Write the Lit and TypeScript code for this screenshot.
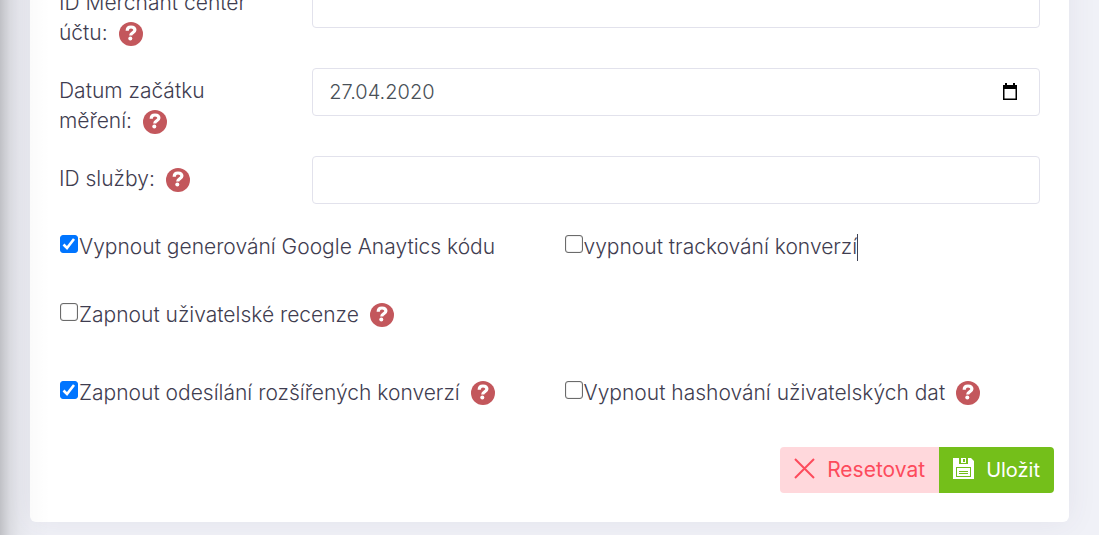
import { LitElement, html, css, svg } from "lit";
import { customElement, property } from "lit/decorators.js";

@customElement("help-badge")
class HelpBadge extends LitElement {
  static styles = css`
    :host {
      display: inline-block;
      width: 24px;
      height: 24px;
      margin-left: 5px;
      vertical-align: middle;
    }
    .badge {
      display: block;
      width: 24px;
      height: 24px;
      padding: 0;
      border: 0;
      border-radius: 50%;
      background: #c3575c;
      cursor: help;
    }
    .glyph {
      display: block;
    }
  `;
  render() {
    return html`<button class="badge" type="button" aria-label="Nápověda">
      <svg class="glyph" width="24" height="24" viewBox="0 0 24 24" fill="none">
        <path
          d="M8.200 8.800C8.200 6.200 9.800 5 12 5s3.900 1.100 3.900 3.100c0 2.700-4.200 2.200-4.200 5.300"
          stroke="#fff"
          stroke-width="3.200"
        />
        <circle cx="11.300" cy="16.600" r="2" fill="#fff" />
      </svg>
    </button>`;
  }
}

@customElement("check-option")
class CheckOption extends LitElement {
  @property() label = "";
  @property({ type: Boolean }) checked = false;
  @property({ type: Boolean }) help = false;
  @property({ type: Boolean }) caret = false;

  static styles = css`
    :host {
      display: block;
      padding-left: 14px;
      line-height: 30px;
    }
    .line {
      display: flex;
      align-items: center;
    }
    .label {
      display: flex;
      white-space: nowrap;
    }
    .box {
      appearance: none;
      flex: none;
      box-sizing: border-box;
      width: 18px;
      height: 18px;
      margin: 3px 1px 9px 1px;
      border: 1px solid #6b6b6b;
      border-radius: 3px;
      background: #fff;
      box-shadow: inset 0 0 1px #767676;
    }
    .box:checked {
      border-color: #0075ff;
      box-shadow: none;
      background: #0075ff
        url("data:image/svg+xml,%3Csvg xmlns='http://www.w3.org/2000/svg' viewBox='0 0 14 14'%3E%3Cpath d='M1.500 7.500l3.500 3.500 7-9' fill='none' stroke='white' stroke-width='2.600'/%3E%3C/svg%3E")
        center / 14px 14px no-repeat;
    }
    .caret {
      width: 1px;
      height: 27px;
      background: #3f4254;
    }
    help-badge {
      margin-left: 11px;
    }
  `;
  render() {
    return html`<div class="line">
      <label class="label"
        ><input class="box" type="checkbox" .checked=${this.checked} /><span
          >${this.label}</span
        ></label
      >
      ${this.caret ? html`<span class="caret"></span>` : ""}
      ${this.help ? html`<help-badge></help-badge>` : ""}
    </div>`;
  }
}

const calendarIcon = svg`
  <path d="M3 0h2v2h6V0h2v2h2v15H1V2h2z M2.500 6v9.500h11V6z" fill="#000" fill-rule="evenodd"/>`;

@customElement("app-root")
class AppRoot extends LitElement {
  static styles = css`
    :host {
      display: block;
      font-family: Inter, "Open Sans", sans-serif;
      font-size: 21px;
      font-weight: 300;
      line-height: 30px;
      color: #3f3d50;
    }
    .page {
      position: relative;
      box-sizing: border-box;
      min-height: 100vh;
      padding: 0 30px 13px;
      overflow: hidden;
      background: #f0f1f7;
    }
    .page::after {
      content: "";
      position: absolute;
      inset: 0 auto 0 0;
      width: 50px;
      pointer-events: none;
      background: linear-gradient(
        90deg,
        rgba(0, 0, 0, 0.2),
        rgba(0, 0, 0, 0.09) 20%,
        rgba(0, 0, 0, 0.04) 40%,
        rgba(0, 0, 0, 0.014) 62%,
        rgba(0, 0, 0, 0)
      );
    }
    .card {
      margin-top: -40px;
      padding: 20px 15px 29px;
      border-radius: 6px;
      background: #fff;
      box-shadow: 0 0 30px rgba(82, 63, 105, 0.08);
    }
    .field {
      display: grid;
      grid-template-columns: 1fr 3fr;
      align-items: start;
      margin-bottom: 20px;
    }
    .name {
      padding: 8px 40px 0 14px;
    }
    .control {
      display: flex;
      align-items: center;
      box-sizing: border-box;
      height: 48px;
      margin: 0 14px 0 15px;
      border: 1px solid #e2e2ec;
      border-radius: 4px;
    }
    .input {
      flex: 1;
      min-width: 0;
      height: 30px;
      padding: 0 16px;
      border: 0;
      outline: 0;
      background: none;
      font: inherit;
      font-size: 20px;
      color: #495057;
    }
    .picker {
      width: 20px;
      height: 20px;
      margin-right: 18px;
      padding: 0;
      border: 0;
      background: none;
    }
    .picker-icon {
      display: block;
    }
    .options {
      display: grid;
      grid-template-columns: 1fr 1fr;
      margin-top: 28px;
    }
    .options + .options {
      margin-top: 38px;
    }
    .options.last {
      margin-top: 48px;
    }
    .actions {
      display: flex;
      justify-content: flex-end;
      margin-top: 39px;
    }
    .btn {
      display: flex;
      align-items: center;
      gap: 12px;
      height: 46px;
      padding: 0 14px;
      border: 0;
      font: inherit;
      font-weight: 400;
    }
    .reset {
      border-radius: 4px 0 0 4px;
      background: #ffd8dc;
      color: #fd4b5c;
    }
    .save {
      border-radius: 0 4px 4px 0;
      background: #74bf1a;
      color: #fff;
      font-size: 20px;
    }
    .icon {
      margin-bottom: 4px;
    }
  `;

  render() {
    return html`<main class="page">
      <form class="card" @submit=${(e: Event) => e.preventDefault()}>
        <div class="field">
          <div class="name">
            <label for="merchant">ID Merchant center účtu:</label>
            <help-badge></help-badge>
          </div>
          <div class="control"><input class="input" id="merchant" type="text" /></div>
        </div>
        <div class="field">
          <div class="name">
            <label for="start">Datum začátku měření:</label>
            <help-badge></help-badge>
          </div>
          <div class="control">
            <input class="input" id="start" type="text" value="27.04.2020" />
            <button class="picker" type="button" aria-label="Vybrat datum">
              <svg class="picker-icon" width="18" height="18" viewBox="0 0 16 18">
                ${calendarIcon}
              </svg>
            </button>
          </div>
        </div>
        <div class="field">
          <div class="name">
            <label for="service">ID služby:</label>
            <help-badge></help-badge>
          </div>
          <div class="control"><input class="input" id="service" type="text" /></div>
        </div>
        <div class="options">
          <check-option label="Vypnout generování Google Anaytics kódu" checked></check-option>
          <check-option label="vypnout trackování konverzí" caret></check-option>
        </div>
        <div class="options">
          <check-option label="Zapnout uživatelské recenze" help></check-option>
        </div>
        <div class="options last">
          <check-option label="Zapnout odesílání rozšířených konverzí" checked help></check-option>
          <check-option label="Vypnout hashování uživatelských dat" help></check-option>
        </div>
        <div class="actions">
          <button class="btn reset" type="reset">
            <svg class="icon" width="21" height="21" viewBox="0 0 21 21" fill="none">
              <path d="M1 1l19 19M20 1L1 20" stroke="currentColor" stroke-width="2" />
            </svg>
            Resetovat
          </button>
          <button class="btn save" type="submit">
            <svg class="icon" width="21" height="21" viewBox="0 0 21 21">
              <path
                fill="currentColor"
                fill-rule="evenodd"
                d="M0 0h6v6h9V0h3l3 3v18H0zM8 0h5v5H8zM3 9v10h15V9zM4 10h13v8H4z"
              />
              <path d="M10 1h2v3h-2z" fill="#74bf1a" />
              <path d="M6 13h9v1H6zM6 15h9v1H6z" fill="#74bf1a" />
            </svg>
            Uložit
          </button>
        </div>
      </form>
    </main>`;
  }
}
